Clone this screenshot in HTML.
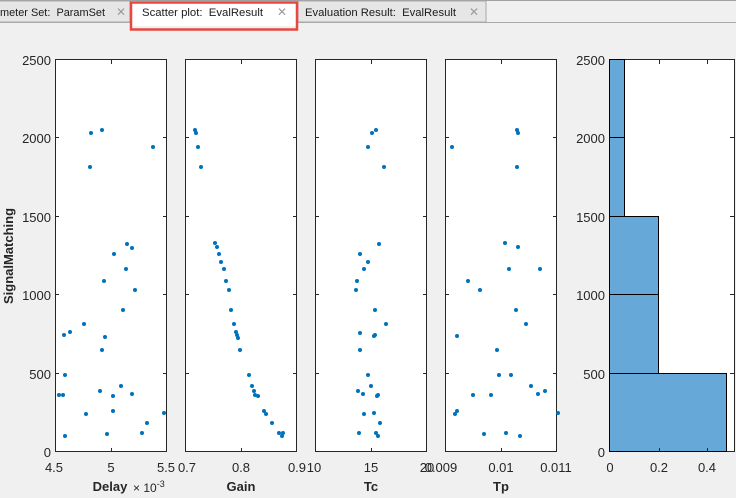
<!DOCTYPE html>
<html><head><meta charset="utf-8"><style>
html,body{margin:0;padding:0;background:#f0f0f0;width:736px;height:498px;overflow:hidden;font-family:"Liberation Sans",sans-serif}
</style></head><body>
<svg width="736" height="498" xmlns="http://www.w3.org/2000/svg" style="position:absolute;left:0;top:0">
<rect width="736" height="498" fill="#f0f0f0"/>
<!-- tabs -->
<rect x="0" y="0" width="736" height="1" fill="#a0a0a0"/>
<rect x="-5" y="1" width="135" height="21" fill="#e6e6e6" stroke="#a9a9a9"/>
<rect x="298" y="1" width="188" height="21" fill="#e6e6e6" stroke="#a9a9a9"/>
<line x1="0" y1="22.5" x2="736" y2="22.5" stroke="#a9a9a9"/>
<rect x="131" y="1" width="166" height="25" fill="#ffffff"/>
<rect x="131" y="2.5" width="166" height="27" fill="none" stroke="#e8473f" stroke-width="2.5"/>
<g font-size="11" fill="#1a1a1a">
<text x="0" y="16" textLength="105" lengthAdjust="spacingAndGlyphs">meter Set:&#160; ParamSet</text>
<text x="142" y="16" textLength="121" lengthAdjust="spacingAndGlyphs">Scatter plot:&#160; EvalResult</text>
<text x="305" y="16" textLength="151" lengthAdjust="spacingAndGlyphs">Evaluation Result:&#160; EvalResult</text>
</g>
<g font-size="12" fill="#9a9a9a"><text x="116" y="16">✕</text><text x="277" y="16">✕</text><text x="469" y="16">✕</text></g>

<!-- axes -->
<g fill="#ffffff" stroke="#262626" stroke-width="1">
<rect x="55.5" y="59.5" width="111" height="392"/>
<rect x="185.5" y="59.5" width="111" height="392"/>
<rect x="315.5" y="59.5" width="111" height="392"/>
<rect x="445.5" y="59.5" width="111" height="392"/>
<rect x="609.5" y="59.5" width="125" height="392"/>
</g>
<!-- hist bars -->
<g fill="#66a8d7" stroke="#000" stroke-width="1">
<rect x="609.5" y="373.5" width="117" height="78"/>
<rect x="609.5" y="294.5" width="49" height="79"/>
<rect x="609.5" y="216.5" width="49" height="78"/>
<rect x="609.5" y="137.5" width="15" height="79"/>
<rect x="609.5" y="59.5" width="15" height="78"/>
</g>
<!-- ticks -->
<g stroke="#262626" stroke-width="1">
<path d="M55 137.5h4M55 216.5h4M55 294.5h4M55 373.5h4M167 137.5h-4M167 216.5h-4M167 294.5h-4M167 373.5h-4M111.5 60v4M111.5 452v-4"/>
<path d="M185 137.5h4M185 216.5h4M185 294.5h4M185 373.5h4M297 137.5h-4M297 216.5h-4M297 294.5h-4M297 373.5h-4M241.5 60v4M241.5 452v-4"/>
<path d="M315 137.5h4M315 216.5h4M315 294.5h4M315 373.5h4M427 137.5h-4M427 216.5h-4M427 294.5h-4M427 373.5h-4M371.5 60v4M371.5 452v-4"/>
<path d="M445 137.5h4M445 216.5h4M445 294.5h4M445 373.5h4M557 137.5h-4M557 216.5h-4M557 294.5h-4M557 373.5h-4M501.5 60v4M501.5 452v-4"/>
<path d="M734 137.5h-4M734 216.5h-4M734 294.5h-4M734 373.5h-4M659.5 60v4M707.5 60v4M659.5 452v-4M707.5 452v-4"/>
</g>
<!-- tick labels -->
<g font-size="13" fill="#262626" text-anchor="end">
<text x="51" y="65">2500</text><text x="51" y="143">2000</text><text x="51" y="222">1500</text><text x="51" y="300">1000</text><text x="51" y="379">500</text><text x="51" y="457">0</text>
<text x="605" y="65">2500</text><text x="605" y="143">2000</text><text x="605" y="222">1500</text><text x="605" y="300">1000</text><text x="605" y="379">500</text><text x="605" y="457">0</text>
</g>
<g font-size="13" fill="#262626" text-anchor="middle">
<text x="54" y="472">4.5</text><text x="111" y="472">5</text><text x="166" y="472">5.5</text>
<text x="187" y="472">0.7</text><text x="241" y="472">0.8</text><text x="297" y="472">0.9</text>
<text x="314" y="472">10</text><text x="371" y="472">15</text><text x="427" y="472">20</text>
<text x="441" y="472">0.009</text><text x="501" y="472">0.01</text><text x="556" y="472">0.011</text>
<text x="610" y="472">0</text><text x="659" y="472">0.2</text><text x="707" y="472">0.4</text>
</g>
<g font-size="13" font-weight="bold" fill="#262626" text-anchor="middle">
<text x="110" y="491">Delay</text><text x="241" y="491">Gain</text><text x="371" y="491">Tc</text><text x="501" y="491">Tp</text>
<text transform="translate(13,256) rotate(-90)">SignalMatching</text>
</g>
<text x="133" y="492" font-size="12" fill="#262626">× 10<tspan dy="-5" font-size="9">-3</tspan></text>
<!-- dots -->
<g fill="#0072bd">
<circle cx="91" cy="133" r="2"/><circle cx="102" cy="130" r="2"/><circle cx="90" cy="167" r="2"/><circle cx="153" cy="147" r="2"/><circle cx="127" cy="244" r="2"/><circle cx="132" cy="248" r="2"/><circle cx="114" cy="254" r="2"/><circle cx="126" cy="269" r="2"/><circle cx="104" cy="281" r="2"/><circle cx="135" cy="290" r="2"/><circle cx="123" cy="310" r="2"/><circle cx="84" cy="324" r="2"/><circle cx="64" cy="335" r="2"/><circle cx="70" cy="332" r="2"/><circle cx="105" cy="337" r="2"/><circle cx="102" cy="350" r="2"/><circle cx="65" cy="375" r="2"/><circle cx="100" cy="391" r="2"/><circle cx="121" cy="386" r="2"/><circle cx="132" cy="394" r="2"/><circle cx="59" cy="395" r="2"/><circle cx="63" cy="395" r="2"/><circle cx="113" cy="396" r="2"/><circle cx="86" cy="414" r="2"/><circle cx="113" cy="411" r="2"/><circle cx="147" cy="423" r="2"/><circle cx="142" cy="433" r="2"/><circle cx="164" cy="413" r="2"/><circle cx="65" cy="436" r="2"/><circle cx="107" cy="434" r="2"/>
<circle cx="195" cy="130" r="2"/><circle cx="196" cy="133" r="2"/><circle cx="198" cy="147" r="2"/><circle cx="201" cy="167" r="2"/><circle cx="215" cy="243" r="2"/><circle cx="217" cy="247" r="2"/><circle cx="219" cy="254" r="2"/><circle cx="221" cy="262" r="2"/><circle cx="224" cy="269" r="2"/><circle cx="226" cy="281" r="2"/><circle cx="229" cy="290" r="2"/><circle cx="231" cy="310" r="2"/><circle cx="234" cy="324" r="2"/><circle cx="236" cy="332" r="2"/><circle cx="237" cy="335" r="2"/><circle cx="238" cy="338" r="2"/><circle cx="240" cy="350" r="2"/><circle cx="249" cy="375" r="2"/><circle cx="252" cy="386" r="2"/><circle cx="254" cy="391" r="2"/><circle cx="255" cy="395" r="2"/><circle cx="258" cy="396" r="2"/><circle cx="264" cy="411" r="2"/><circle cx="266" cy="414" r="2"/><circle cx="272" cy="423" r="2"/><circle cx="279" cy="433" r="2"/><circle cx="282" cy="436" r="2"/><circle cx="283" cy="433" r="2"/>
<circle cx="372" cy="133" r="2"/><circle cx="376" cy="130" r="2"/><circle cx="384" cy="167" r="2"/><circle cx="368" cy="147" r="2"/><circle cx="379" cy="244" r="2"/><circle cx="360" cy="254" r="2"/><circle cx="368" cy="262" r="2"/><circle cx="356" cy="290" r="2"/><circle cx="375" cy="310" r="2"/><circle cx="386" cy="324" r="2"/><circle cx="360" cy="333" r="2"/><circle cx="374" cy="336" r="2"/><circle cx="375" cy="335" r="2"/><circle cx="360" cy="350" r="2"/><circle cx="368" cy="375" r="2"/><circle cx="371" cy="386" r="2"/><circle cx="358" cy="391" r="2"/><circle cx="363" cy="394" r="2"/><circle cx="377" cy="396" r="2"/><circle cx="378" cy="395" r="2"/><circle cx="364" cy="414" r="2"/><circle cx="374" cy="413" r="2"/><circle cx="380" cy="423" r="2"/><circle cx="378" cy="436" r="2"/><circle cx="359" cy="433" r="2"/><circle cx="364" cy="269" r="2"/><circle cx="357" cy="281" r="2"/><circle cx="376" cy="433" r="2"/>
<circle cx="452" cy="147" r="2"/><circle cx="517" cy="130" r="2"/><circle cx="518" cy="133" r="2"/><circle cx="517" cy="167" r="2"/><circle cx="505" cy="243" r="2"/><circle cx="518" cy="247" r="2"/><circle cx="468" cy="281" r="2"/><circle cx="480" cy="290" r="2"/><circle cx="509" cy="269" r="2"/><circle cx="516" cy="310" r="2"/><circle cx="457" cy="336" r="2"/><circle cx="526" cy="324" r="2"/><circle cx="497" cy="350" r="2"/><circle cx="499" cy="375" r="2"/><circle cx="540" cy="269" r="2"/><circle cx="531" cy="386" r="2"/><circle cx="545" cy="391" r="2"/><circle cx="538" cy="394" r="2"/><circle cx="473" cy="395" r="2"/><circle cx="491" cy="395" r="2"/><circle cx="457" cy="411" r="2"/><circle cx="455" cy="414" r="2"/><circle cx="558" cy="413" r="2"/><circle cx="520" cy="436" r="2"/><circle cx="484" cy="434" r="2"/><circle cx="506" cy="433" r="2"/><circle cx="511" cy="375" r="2"/>
</g>
</svg>
</body></html>
